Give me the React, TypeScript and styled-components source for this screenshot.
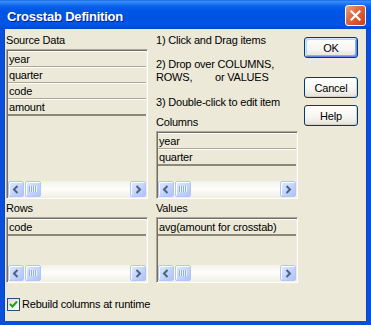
import React from "react";
import styled, { createGlobalStyle } from "styled-components";

const Global = createGlobalStyle`
  html, body { margin: 0; padding: 0; background: #ffffff; }
  body { font-family: "Liberation Sans", Arial, sans-serif; font-size: 11px; }
`;

const Window = styled.div`
  width: 371px;
  height: 325px;
  display: flex;
  flex-direction: column;
  box-sizing: border-box;
`;

const TitleBar = styled.div`
  height: 29px;
  flex: none;
  display: flex;
  align-items: center;
  justify-content: space-between;
  padding: 0 5px 0 7px;
  box-sizing: border-box;
  background: linear-gradient(
    to bottom,
    #0a5be0 0px,
    #3d8ef5 1px,
    #2a80f5 3px,
    #0b63ec 6px,
    #0057e6 10px,
    #0053e1 18px,
    #0055e8 24px,
    #0150df 27px,
    #0043cf 29px
  );
`;

const Title = styled.span`
  color: #ffffff;
  font: bold 13px "Liberation Sans", Arial, sans-serif;
  letter-spacing: -0.2px;
  text-shadow: 1px 1px 0 #0a1e8c;
  margin-top: 3px;
`;

const CloseButton = styled.div`
  width: 21px;
  height: 21px;
  margin-top: 2px;
  box-sizing: border-box;
  border: 1px solid #ffffff;
  border-radius: 3px;
  background: linear-gradient(135deg, #eba283 0%, #de643b 45%, #c8401a 100%);
  display: flex;
  align-items: center;
  justify-content: center;
`;

const Body = styled.div`
  flex: 1;
  background: #ece9d8;
  border-style: solid;
  border-width: 0 4px 4px 4px;
  border-color: #0a4edc;
  box-shadow: inset 1px 0 0 #0842c8, inset -1px 0 0 #0842c8;
  padding: 5px 0 0 2px;
  display: flex;
  flex-direction: column;
`;

const Section = styled.div<{ $top?: number }>`
  display: flex;
  margin-top: ${(p) => p.$top ?? 0}px;
`;

const Column = styled.div<{ $left?: number }>`
  width: 142px;
  display: flex;
  flex-direction: column;
  margin-left: ${(p) => p.$left ?? 0}px;
`;

const Text = styled.div<{ $top?: number }>`
  height: 13px;
  line-height: 13px;
  color: #000000;
  letter-spacing: -0.2px;
  white-space: nowrap;
  margin-top: ${(p) => p.$top ?? 0}px;
`;

const Para = styled.div<{ $top?: number }>`
  line-height: 13px;
  color: #000000;
  letter-spacing: -0.2px;
  white-space: nowrap;
  margin-top: ${(p) => p.$top ?? 0}px;
`;

const Gap = styled.span`
  display: inline-block;
  width: 59px;
`;

const ListBox = styled.div<{ $h: number }>`
  height: ${(p) => p.$h}px;
  margin-top: 2px;
  box-sizing: border-box;
  border: 1px solid;
  border-color: #aca899 #ffffff #ffffff #aca899;
  box-shadow: inset 1px 1px 0 #716f64, inset -1px -1px 0 #f1efe2;
  padding: 1px;
  display: flex;
  flex-direction: column;
  background: #ece9d8;
`;

const Items = styled.div`
  flex: 1;
  display: flex;
  flex-direction: column;
`;

const Item = styled.div<{ $last?: boolean }>`
  height: ${(p) => (p.$last ? 17 : 16)}px;
  box-sizing: border-box;
  border-top: 1px solid #ffffff;
  border-bottom: ${(p) => (p.$last ? "2px solid #8c897b" : "1px solid #aca899")};
  padding-left: 1px;
  line-height: 14px;
  letter-spacing: -0.2px;
  white-space: nowrap;
  overflow: hidden;
  color: #000000;
`;

const Scroll = styled.div`
  height: 16px;
  flex: none;
  display: flex;
  background: linear-gradient(to bottom, #f3f1ec, #fefefb 50%, #f1efe8);
`;

const ScrollBtn = styled.div`
  width: 16px;
  height: 16px;
  box-sizing: border-box;
  border: 1px solid #b3c6f3;
  border-radius: 2px;
  background: linear-gradient(135deg, #e0e9fe 0%, #c3d4fb 55%, #aec3f5 100%);
  box-shadow: inset 1px 1px 0 #ffffff;
  display: flex;
  align-items: center;
  justify-content: center;
  flex: none;
`;

const Thumb = styled(ScrollBtn)`
  margin-left: 1px;
`;

const Track = styled.div`
  flex: 1;
`;

const ButtonCol = styled.div`
  width: 54px;
  margin-left: 6px;
  padding-top: 3px;
  display: flex;
  flex-direction: column;
`;

const Button = styled.div<{ $top?: number; $default?: boolean }>`
  height: 21px;
  margin-top: ${(p) => p.$top ?? 0}px;
  box-sizing: border-box;
  border: 1px solid #003c74;
  border-radius: 3px;
  background: linear-gradient(to bottom, #ffffff 0%, #f6f5f0 60%, #e3e1d6 100%);
  box-shadow: ${(p) =>
    p.$default
      ? "inset 1px 1px 0 #cee7ff, inset -1px -1px 0 #6982ee, inset 2px 2px 0 #bcd4f6, inset -2px -2px 0 #89adf4"
      : "inset -1px -1px 0 #d6d0c5"};
  display: flex;
  align-items: center;
  justify-content: center;
  color: #000000;
  letter-spacing: -0.2px;
`;

const CheckRow = styled.div`
  display: flex;
  align-items: center;
  margin-top: 15px;
  margin-left: 1px;
  height: 13px;
`;

const CheckBox = styled.div`
  width: 13px;
  height: 13px;
  box-sizing: border-box;
  border: 1px solid #1c5180;
  background: linear-gradient(135deg, #dcdcd7 0%, #ffffff 100%);
  display: flex;
  align-items: center;
  justify-content: center;
  margin-right: 2px;
`;

const LeftArrow = () => (
  <svg width="8" height="9" viewBox="0 0 8 9">
    <path d="M5.5 1 L2 4.5 L5.5 8" fill="none" stroke="#4d6185" strokeWidth="2" />
  </svg>
);

const RightArrow = () => (
  <svg width="8" height="9" viewBox="0 0 8 9">
    <path d="M2.5 1 L6 4.5 L2.5 8" fill="none" stroke="#4d6185" strokeWidth="2" />
  </svg>
);

const Grip = () => (
  <svg width="8" height="6" viewBox="0 0 8 6">
    {[0, 2, 4, 6].map((x) => (
      <rect key={x} x={x} y={0} width={1} height={6} fill="#8cb0f8" />
    ))}
    {[1, 3, 5, 7].map((x) => (
      <rect key={x} x={x} y={0} width={1} height={6} fill="#eef4fe" />
    ))}
  </svg>
);

const ScrollBar = () => (
  <Scroll>
    <ScrollBtn>
      <LeftArrow />
    </ScrollBtn>
    <Thumb>
      <Grip />
    </Thumb>
    <Track />
    <ScrollBtn>
      <RightArrow />
    </ScrollBtn>
  </Scroll>
);

const List = ({ items, h }: { items: string[]; h: number }) => (
  <ListBox $h={h}>
    <Items>
      {items.map((it, i) => (
        <Item key={it} $last={i === items.length - 1}>
          {it}
        </Item>
      ))}
    </Items>
    <ScrollBar />
  </ListBox>
);

export default function App() {
  return (
    <>
      <Global />
      <Window>
        <TitleBar>
          <Title>Crosstab Definition</Title>
          <CloseButton>
            <svg width="11" height="11" viewBox="0 0 11 11">
              <path d="M1.5 1.5 L9.5 9.5 M9.5 1.5 L1.5 9.5" stroke="#ffffff" strokeWidth="2.2" strokeLinecap="square" />
            </svg>
          </CloseButton>
        </TitleBar>
        <Body>
          <Section>
            <Column>
              <Text>Source Data</Text>
              <List items={["year", "quarter", "code", "amount"]} h={150} />
            </Column>
            <Column $left={8}>
              <Text>1) Click and Drag items</Text>
              <Para $top={11}>
                2) Drop over COLUMNS,
                <br />
                <Gap>ROWS,</Gap>or VALUES
              </Para>
              <Text $top={12}>3) Double-click to edit item</Text>
              <Text $top={7}>Columns</Text>
              <List items={["year", "quarter"]} h={68} />
            </Column>
            <ButtonCol>
              <Button $default>OK</Button>
              <Button $top={19}>Cancel</Button>
              <Button $top={7}>Help</Button>
            </ButtonCol>
          </Section>
          <Section $top={3}>
            <Column>
              <Text>Rows</Text>
              <List items={["code"]} h={66} />
            </Column>
            <Column $left={8}>
              <Text>Values</Text>
              <List items={["avg(amount for crosstab)"]} h={66} />
            </Column>
          </Section>
          <CheckRow>
            <CheckBox>
              <svg width="9" height="9" viewBox="0 0 9 9">
                <path d="M1 4 L3.5 6.5 L8 1.5" fill="none" stroke="#21a121" strokeWidth="2" />
              </svg>
            </CheckBox>
            <Text>Rebuild columns at runtime</Text>
          </CheckRow>
        </Body>
      </Window>
    </>
  );
}
